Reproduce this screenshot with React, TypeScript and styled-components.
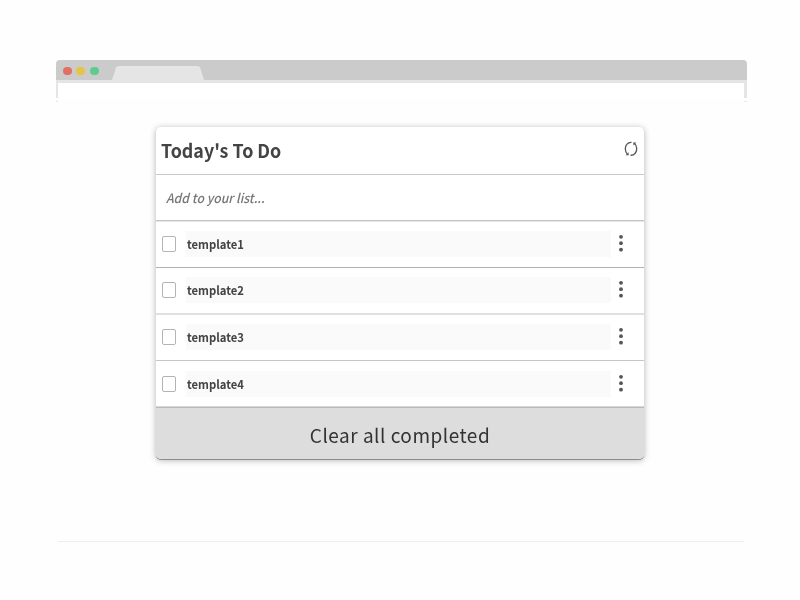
import React from "react";
import styled, { createGlobalStyle } from "styled-components";

const GlobalStyle = createGlobalStyle`
  * { box-sizing: border-box; }
  body {
    margin: 0;
    background: #fefefe;
    font-family: "Noto Sans CJK SC", "Noto Sans", sans-serif;
    color: #444;
  }
`;

const Page = styled.div`
  width: 800px;
  height: 600px;
  padding-top: 60px;
  overflow: hidden;
`;

const BrowserFrame = styled.header`
  width: 691px;
  height: 42px;
  margin-left: 56px;
`;

const TitleBar = styled.div`
  display: flex;
  align-items: flex-end;
  height: 20px;
  background: #cbcbcb;
  border-radius: 4px 4px 0 0;
`;

const WindowButtons = styled.div`
  display: flex;
  gap: 4.6px;
  width: 56px;
  padding: 0 0 4.6px 7px;
`;

const WindowButton = styled.span<{ $color: string }>`
  width: 8.8px;
  height: 8.8px;
  border-radius: 50%;
  background: ${(p) => p.$color};
`;

const Tab = styled.svg`
  display: block;
  width: 94px;
  height: 14px;
`;

const Viewport = styled.div`
  height: 18px;
  border: solid #e5e5e5;
  border-width: 3px 3px 0 2px;
  background: #fff;
`;

const FrameEnds = styled.div`
  height: 1px;
  margin-top: 3px;
  border: solid #e8e8e8;
  border-width: 0 3px 0 2px;
`;

const Card = styled.main`
  width: 488px;
  height: 332px;
  margin: 25px 0 0 156px;
  background: #fff;
  border-radius: 5px;
  overflow: hidden;
`;

const CardShadow = styled.div`
  width: 644px;
  filter: drop-shadow(0 1px 0.7px rgba(0, 0, 0, 0.32)) drop-shadow(0 1px 3px rgba(0, 0, 0, 0.3));
`;

const Line = styled.div<{ $height: number; $top: string; $bottom?: string }>`
  height: ${(p) => p.$height}px;
  background: ${(p) => p.$top};
  ${(p) => p.$bottom && `border-bottom: 1px solid ${p.$bottom};`}
`;

const Header = styled.div`
  display: flex;
  justify-content: space-between;
  height: 47px;
  padding: 0 6px 0 5px;
`;

const Title = styled.h1`
  margin: 0;
  font-size: 19px;
  font-weight: 700;
  line-height: 46px;
  white-space: nowrap;
  transform: scaleX(0.94);
  transform-origin: left;
`;

const RefreshIcon = styled.svg`
  width: 14px;
  height: 16px;
  margin-top: 14px;
`;

const AddField = styled.div`
  height: 45px;
  padding-left: 10px;
  font-size: 13px;
  font-weight: 500;
  font-style: italic;
  line-height: 45px;
  color: #777;
`;

const Squeezed = styled.span<{ $scale: number }>`
  display: inline-block;
  white-space: nowrap;
  transform: scaleX(${(p) => p.$scale});
  transform-origin: left;
`;

const Item = styled.div<{ $height: number; $top: number }>`
  display: flex;
  align-items: flex-start;
  height: ${(p) => p.$height}px;
  padding: ${(p) => p.$top}px 0 0 6px;
`;

const Checkbox = styled.span`
  width: 14px;
  height: 16px;
  margin: 5px 10px 0 0;
  border: 1px solid #b4b4b4;
  border-radius: 2px;
  background: #fff;
`;

const ItemText = styled.div`
  width: 425px;
  height: 26px;
  padding-left: 1px;
  background: #fafafa;
  font-size: 12px;
  font-weight: 700;
  line-height: 26px;
`;

const MenuIcon = styled.svg`
  width: 6px;
  height: 18px;
  margin: 3px 0 0 7px;
`;

const ClearButton = styled.button`
  display: block;
  width: 100%;
  height: 52px;
  padding: 0;
  border: 0;
  background: #ddd;
  color: #333;
  font: 400 19px/51px "Noto Sans CJK SC", "Noto Sans", sans-serif;
  letter-spacing: 0.5px;
`;

const Divider = styled.hr`
  width: 686px;
  height: 1px;
  margin: 82px 0 0 58px;
  border: 0;
  background: #eee;
`;

const items = [
  { text: "template1", height: 45, top: 9, line: { $height: 1, $top: "#b0b0b0" } },
  { text: "template2", height: 45, top: 9, line: { $height: 2, $top: "#dedede", $bottom: "#e2e2e2" } },
  { text: "template3", height: 45, top: 9, line: { $height: 1, $top: "#c6c6c6" } },
  { text: "template4", height: 45, top: 10, line: { $height: 2, $top: "#d8d8d8", $bottom: "#b9b9b9" } },
];

export default function App() {
  return (
    <Page>
      <GlobalStyle />
      <BrowserFrame>
        <TitleBar>
          <WindowButtons>
            <WindowButton $color="#e16f64" />
            <WindowButton $color="#e5c543" />
            <WindowButton $color="#5dcb8d" />
          </WindowButtons>
          <Tab viewBox="0 0 94 14">
            <path d="M0 14 L4 1.5 Q4.6 0 6.5 0 H85.5 Q87.5 0 88.2 1.5 L92 14Z" fill="#e5e5e5" />
          </Tab>
        </TitleBar>
        <Viewport />
        <FrameEnds />
      </BrowserFrame>
      <CardShadow>
        <Card>
          <Header>
            <Title>Today's To Do</Title>
            <RefreshIcon viewBox="0 0 14 16" fill="none" stroke="#555" strokeWidth="1.3">
              <path d="M7.5 1.4 C3.8 1 1.3 4.2 1.3 7.8 C1.3 10.2 2.2 12.2 3.7 13.4" />
              <path d="M6.5 14.2 C10.2 14.6 12.7 11.4 12.7 7.8 C12.7 5.4 11.8 3.4 10.3 2.2" />
              <path d="M1.7 14.2 L4.8 14.2 L4.5 11.2Z M12.3 1.4 L9.2 1.4 L9.5 4.4Z" fill="#555" stroke="none" />
            </RefreshIcon>
          </Header>
          <Line $height={1} $top="#c8c8c8" />
          <AddField>
            <Squeezed $scale={0.94}>Add to your list...</Squeezed>
          </AddField>
          <Line $height={2} $top="#c4c4c4" $bottom="#e6e6e6" />
          {items.map((item) => (
            <React.Fragment key={item.text}>
              <Item $height={item.height} $top={item.top}>
                <Checkbox />
                <ItemText>
                  <Squeezed $scale={0.94}>{item.text}</Squeezed>
                </ItemText>
                <MenuIcon viewBox="0 0 6 18" fill="#555">
                  <circle cx="3" cy="2.8" r="1.9" />
                  <circle cx="3" cy="9.2" r="1.9" />
                  <circle cx="3" cy="15.7" r="1.9" />
                </MenuIcon>
              </Item>
              <Line {...item.line} />
            </React.Fragment>
          ))}
          <ClearButton>Clear all completed</ClearButton>
        </Card>
      </CardShadow>
      <Divider />
    </Page>
  );
}
